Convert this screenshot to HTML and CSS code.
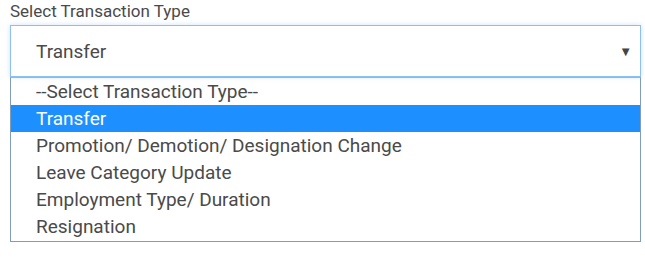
FILE: index.html
```html
<!DOCTYPE html>
<html lang="en">
<head>
    <meta charset="UTF-8">
    <title>Transaction type</title>
    <link rel="stylesheet" href="styles.css">
</head>
<body>
    <div class="field">
        <label class="field-label">Select Transaction Type</label>
        <div class="select-box">
            <span class="select-value">Transfer</span>
            <span class="select-arrow">&#9660;</span>
        </div>
        <ul class="options">
            <li>--Select Transaction Type--</li>
            <li class="active">Transfer</li>
            <li>Promotion/ Demotion/ Designation Change</li>
            <li>Leave Category Update</li>
            <li>Employment Type/ Duration</li>
            <li>Resignation</li>
        </ul>
    </div>
</body>
</html>
```

FILE: styles.css
```css
*{
    margin: 0;
    padding: 0;
    box-sizing: border-box;
}
body{
    background: #fff;
    font-family: Roboto, "Liberation Sans", sans-serif;
    color: #4a4a4a;
}
.field{
    display: flex;
    flex-direction: column;
    width: 631px;
    margin-left: 10px;
}
.field-label{
    font-size: 17px;
    line-height: 22px;
    height: 25px;
}
.select-box{
    height: 52px;
    border: 1px solid #8cc0f2;
    box-shadow: 0 0 5px rgba(120, 170, 230, 0.35);
    display: flex;
    align-items: center;
    justify-content: space-between;
    padding: 0 8px 0 25px;
    font-size: 19px;
}
.select-arrow{
    font-size: 13px;
    color: #444;
}
.options{
    list-style: none;
    border: 1px solid #7f9db9;
    border-top: 1px solid #9cb7d4;
    font-size: 19px;
    padding-bottom: 1px;
}
.options li{
    height: 27px;
    line-height: 27px;
    padding-left: 25px;
}
.options li.active{
    background: #1e8fff;
    color: #fff;
}
```
